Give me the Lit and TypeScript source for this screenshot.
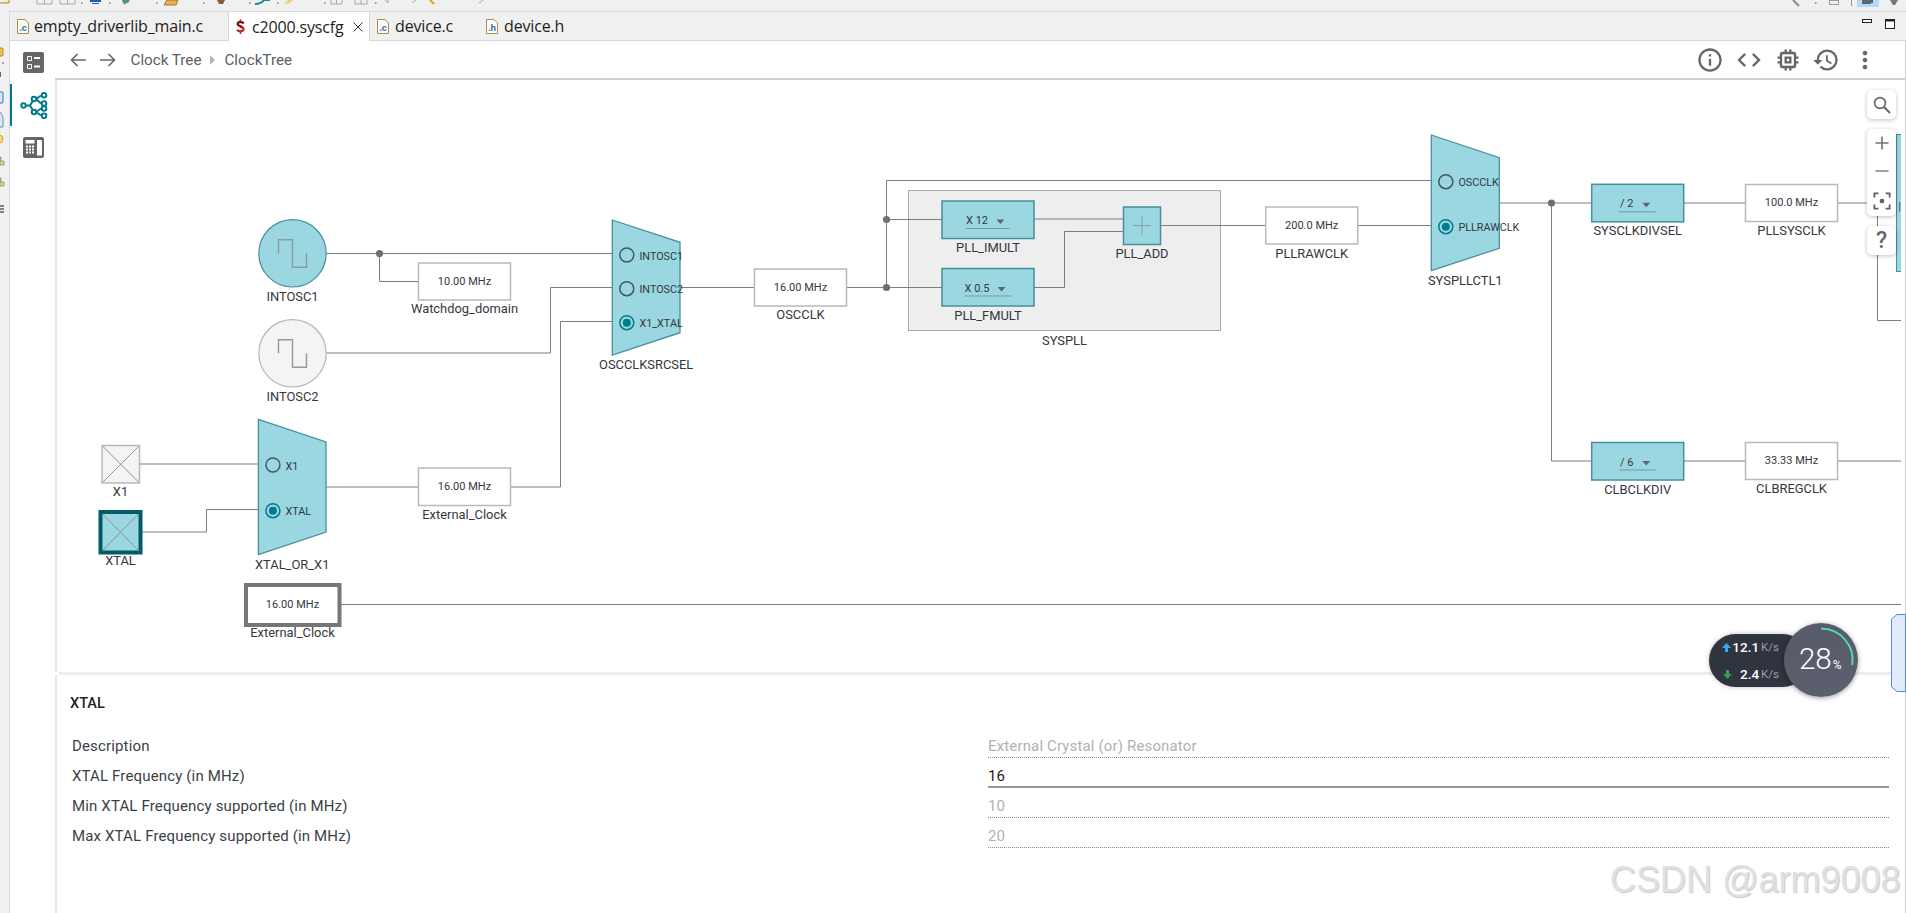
import { LitElement, html, css, svg } from "lit";
import { customElement } from "lit/decorators.js";

const TEAL = "#9ad7e0";
const TEAL_LINE = "#46909c";
const WIRE = "#7d7d7d";

const wires: string[] = [
  "M326.5 253.5H612",
  "M379.5 253.5V281.5H418",
  "M326.5 353H550.5V287.5H612",
  "M510.6 487H560.5V321.5H612",
  "M326 487H418",
  "M139.6 464H258",
  "M142 532H206.5V509.5H258",
  "M341 604.5H1901",
  "M680 287.5H754",
  "M846 287.5H942",
  "M886.5 287.5V180.5H1431",
  "M886.5 219.5H942",
  "M1034 219H1123",
  "M1034 287.5H1064.5V231.5H1123",
  "M1161 225.5H1266",
  "M1357.6 225.5H1431",
  "M1499 203H1591",
  "M1551.5 203V461H1591",
  "M1684 203H1745",
  "M1837 203H1896",
  "M1877.5 203V320.5H1901",
  "M1684 461H1745",
  "M1837 461H1901",
];
const dots: [number, number][] = [
  [379.5, 253.5],
  [886.5, 219.5],
  [886.5, 287.5],
  [1551.5, 203],
];

const label = (x: number, y: number, t: string, size = 12.9) =>
  svg`<text x=${x} y=${y} class="t" font-size=${size} text-anchor="middle" dominant-baseline="central">${t}</text>`;

const valueBox = (x: number, y: number, w: number, h: number, v: string, l: string, ly: number) => svg`
  <rect x=${x} y=${y} width=${w} height=${h} fill="#fff" stroke="#b9b9b9" stroke-width="1.5"></rect>
  ${label(x + w / 2, y + h / 2 - 0.5, v, 11)}
  ${label(x + w / 2, ly, l)}`;

const dropBox = (x: number, y: number, v: string, l: string, tx: number, ax: number, u1: number, u2: number) => svg`
  <rect x=${x} y=${y} width="92" height="37.5" fill=${TEAL} stroke=${TEAL_LINE} stroke-width="1.5"></rect>
  <text x=${tx} y=${y + 19.5} class="t" font-size="11" dominant-baseline="central">${v}</text>
  <path d="M${ax - 4} ${y + 18.5}h8l-4 4.5z" fill="#566a70"></path>
  <path d="M${u1} ${y + 27.5}H${u2}" stroke="#6f9ba5" stroke-width="1"></path>
  ${label(x + 46, y + 46.5, l)}`;

const radio = (x: number, y: number, t: string, on: boolean) => svg`
  <circle cx=${x} cy=${y} r="7" fill="none" stroke=${on ? "#007c8c" : "#47585e"} stroke-width="1.5"></circle>
  ${on ? svg`<circle cx=${x} cy=${y} r="4" fill="#007c8c"></circle>` : ""}
  <text x=${x + 12.6} y=${y + 1.2} class="t" font-size="10.8" dominant-baseline="central">${t}</text>`;

const mux = (x: number, w: number, top: number, rt: number, rb: number, bot: number, l: string, ly: number, items: [number, string, boolean][]) => svg`
  <path d="M${x} ${top}L${x + w} ${rt}V${rb}L${x} ${bot}Z" fill=${TEAL} stroke=${TEAL_LINE} stroke-width="1.3"></path>
  ${items.map(([y, t, on]) => radio(x + 14.5, y, t, on))}
  ${label(x + w / 2, ly, l)}`;

const wave = (cx: number, cy: number) =>
  svg`<path d="M${cx - 14} ${cy}V${cy - 13.5}H${cx}V${cy + 14}H${cx + 14}V${cy}" fill="none" stroke="#8f9a9d" stroke-width="1.4"></path>`;

const crossBox = (x: number, y: number, w: number, h: number, fill: string, stroke: string, sw: number) => svg`
  <rect x=${x} y=${y} width=${w} height=${h} fill=${fill} stroke=${stroke} stroke-width=${sw}></rect>
  <path d="M${x + sw / 2} ${y + sw / 2}L${x + w - sw / 2} ${y + h - sw / 2}M${x + w - sw / 2} ${y + sw / 2}L${x + sw / 2} ${y + h - sw / 2}" stroke="#8d9699" stroke-width="1"></path>`;

const fileIcon = (letter: string) => html`<svg class="ficon" width="12" height="15" viewBox="0 0 12 15">
  <path d="M.5.5H8L11.5 4V14.5H.5Z" fill="#fdfdf8" stroke="#a98c4e"></path>
  <text x="6" y="11.5" text-anchor="middle" font-size="9" font-family="Liberation Sans" font-weight="700" fill="#2f62a8">${letter}</text>
</svg>`;

@customElement("app-root")
export class AppRoot extends LitElement {
  static styles = css`
    :host { display: block; width: 1906px; height: 913px; position: relative; overflow: hidden; background: #f0f0f0; font-family: Roboto, "Liberation Sans", sans-serif; color: #30343a; }
    .shell { display: grid; grid-template-rows: 12px 1fr; height: 913px; }
    .toolbar { display: block; }
    .work { display: grid; grid-template-columns: 9px 1fr; min-height: 0; }
    .strip { display: block; }
    .main { display: grid; grid-template-rows: 29px 1fr; min-height: 0; border-top: 1px solid #d9d9d9; border-left: 1px solid #d9d9d9; margin-top: -1px; }
    .tabs { display: flex; align-items: stretch; background: #f0f0f0; border-bottom: 1px solid #d8d8d8; font-family: "Open Sans", sans-serif; font-size: 16px; color: #1d1d1d; position: relative; }
    .tab { display: flex; align-items: center; gap: 5px; box-sizing: border-box; letter-spacing: -0.16px; white-space: nowrap; }
    .tab.a { width: 218px; padding-left: 7px; }
    .tab.b { width: 142px; background: #fff; border-left: 1px solid #d8d8d8; border-right: 1px solid #d8d8d8; margin-bottom: -1px; padding-left: 6px; gap: 6px; }
    .tab.c { width: 116px; padding-left: 7px; gap: 6px; }
    .tab.d { width: 109px; padding-left: 0; gap: 6px; }
    .ficon { flex: none; }
    .close { margin-left: 3px; flex: none; }
    .winbtns { position: absolute; right: 10px; top: 6px; }
    .body { display: grid; grid-template-columns: 45px 1fr; background: #fff; min-height: 0; }
    .side { display: flex; flex-direction: column; align-items: center; padding: 11px 0 0 2px; }
    .side-item { width: 100%; display: flex; justify-content: center; align-items: center; box-sizing: border-box; }
    .side-item.one { height: 21px; margin-bottom: 11px; }
    .side-item.two { height: 42px; margin: 0 0 11px -2px; width: calc(100% + 2px); border-left: 2px solid #007c8c; }
    .side-item.three { height: 21px; }
    .content { display: grid; grid-template-rows: 39px 592px 3px 1fr; min-height: 0; min-width: 0; border-right: 1px solid #cfcfcf; }
    .nav { display: flex; align-items: center; padding-left: 15px; border-bottom: 2px solid #d2d2d2; box-sizing: border-box; gap: 14px; }
    .crumbs { display: flex; align-items: center; margin-left: 0.5px; gap: 9px; font-size: 15.2px; color: #5b6066; }
    .nav-icons { margin-left: auto; display: flex; gap: 10.7px; padding-right: 26px; color: #666; }
    .nav-icons svg { display: block; fill: #666; }
    .canvas { position: relative; border-left: 2px solid #e6e6e6; margin-right: 4px; overflow: hidden; }
    .canvas svg { display: block; }
    .t { font-family: Roboto, "Liberation Sans", sans-serif; fill: #34383d; }
    .sep { margin-left: 4px; background: #eeeeee; margin-right: 4px; }
    .details { border-left: 2px solid #e6e6e6; padding: 19px 16px 0 13px; }
    h2 { margin: 0 0 14px 0; font-weight: 500; font-size: 14.5px; line-height: 20px; color: #222; }
    .row { display: grid; grid-template-columns: 916px 901px; height: 30px; box-sizing: border-box; padding-left: 2px; font-size: 15px; line-height: 20px; letter-spacing: 0.15px; color: #3a3f47; }
    .row .v { padding-top: 8px; box-sizing: border-box; height: 30px; border-bottom: 1px dotted #8a8a8a; color: #b1b1b1; }
    .row .k { padding-top: 8px; }
    .row .v.edit { border-bottom: 2px solid #999; color: #1f2329; }
    .ctl { position: absolute; left: 1867px; width: 29px; background: #fff; border-radius: 5px; box-shadow: 0 1px 4px rgba(0,0,0,.25); display: flex; flex-direction: column; align-items: center; color: #666; }
    .ctl svg { display: block; }
    .ctl.s { top: 90px; height: 29px; justify-content: center; }
    .ctl.z { top: 129px; height: 87px; justify-content: space-around; }
    .ctl.h { top: 226px; height: 29px; justify-content: center; font: 500 23px/29px Roboto, sans-serif; }
    .speed { position: absolute; left: 1709px; top: 634px; width: 100px; height: 53px; border-radius: 27px; background: #30343f; box-shadow: 0 0 5px rgba(0,0,0,.25); color: #fff; font-size: 13.5px; font-weight: 500; }
    .sp { position: absolute; left: 0; width: 70px; height: 20px; display: flex; align-items: center; justify-content: flex-end; gap: 0; }
    .sp.u { top: 3px; }
    .sp.d { top: 30px; }
    .sp i { font-style: normal; font-weight: 400; font-size: 11.5px; color: #9a9da6; margin-left: 2px; }
    .sp svg { margin-right: 1px; }
    .sp svg.down { margin-right: 8px; }
    .gauge { position: absolute; left: 1784px; top: 623px; width: 74px; height: 74px; border-radius: 50%; background: linear-gradient(160deg, #565a69, #5c606e); box-shadow: 0 1px 5px rgba(0,0,0,.4); color: #fff; }
    .gauge svg { position: absolute; left: 0; top: 0; }
    .pct { position: absolute; left: 15px; top: 20px; font-size: 29.5px; line-height: 32px; font-weight: 300; display: flex; align-items: baseline; }
    .pct small { font-size: 12px; font-weight: 400; margin-left: 1px; }
    .hex { position: absolute; left: 1891px; top: 614px; }
    .mark { position: absolute; left: 1610px; top: 861px; font: 36px/38px "Liberation Sans", Arial, sans-serif; color: #e0e0e0; text-shadow: 1px 1px 1px #c9c9c9; white-space: nowrap; }
  `;

  private toolbar() {
    const grays = [[37, 15], [60, 15], [331, 11], [355, 12]];
    const dots = [81, 109, 156, 203, 249, 277, 324, 375, 1815];
    return html`<svg class="toolbar" width="1906" height="12" viewBox="0 0 1906 12">
      <path d="M0 3H9V0" fill="#f5df9a" stroke="#a98c4e"></path>
      ${grays.map(([x, w]) => svg`<path d="M${x} 4V0M${x + w} 4V0M${x} 4H${x + w}M${x + w / 2} 4V0" fill="none" stroke="#a8a8a8"></path>`)}
      ${dots.map((x) => svg`<rect x=${x} y="2" width="1.5" height="2" fill="#9a9a9a"></rect>`)}
      <rect x="90" y="0" width="11" height="2" fill="#1f5fb0"></rect><rect x="92" y="3" width="7" height="1" fill="#1f5fb0"></rect>
      <path d="M122 0h8l-2 3h-2l-1 2-2-2z" fill="#4d9a76"></path>
      <path d="M164 5L167 0H178L176 5Z" fill="#e3b257" stroke="#a9772c"></path>
      <path d="M217 0H225L223 4H219Z" fill="#8e5a2f"></path>
      <path d="M255 4C260 4 262 3 264 0H270" fill="none" stroke="#1a87a0" stroke-width="2"></path>
      <path d="M284 4L288 0H293L290 3Z" fill="#f4d27a"></path>
      <path d="M385 0L388 3V0M412 3L416 0M479 3L483 0" fill="none" stroke="#b0a890"></path>
      <path d="M430 0L434 4" stroke="#dd9a2a" stroke-width="2"></path>
      <path d="M1793 0L1799 6" stroke="#888" stroke-width="2"></path>
      <rect x="1829.5" y="0.5" width="9" height="4" fill="none" stroke="#999"></rect>
      <rect x="1851" y="0" width="1" height="6" fill="#999"></rect>
      <rect x="1857" y="0" width="22" height="7" fill="#b5d8f6"></rect>
      <path d="M1862 0h9v4h-9zM1870 0h3v3h-3z" fill="#5d6470"></path>
      <path d="M1890 0h8l-3 5h-2z" fill="#777"></path>
    </svg>`;
  }

  private strip() {
    return html`<svg class="strip" width="9" height="901" viewBox="0 12 9 901">
      <rect x="-2" y="48" width="5" height="8" rx="1" fill="#f1c04e" stroke="#b78a25"></rect>
      <rect x="2" y="62" width="2" height="2" fill="#a5a5a5"></rect>
      <rect x="0" y="72" width="1" height="5" fill="#666"></rect>
      <rect x="-3" y="92" width="6" height="11" rx="1" fill="#dbe6f5" stroke="#3f6bb0"></rect>
      <path d="M0 112C4 116 3 122 3 127H-1" fill="#dce6f2" stroke="#6c8bb3"></path>
      <circle cx="-1" cy="139" r="4" fill="#f8dc8a" stroke="#d9a520"></circle>
      <path d="M0 157h1v4h3v4H0zM0 178h1v4h3v4H0z" fill="#e3d28a" stroke="#7d9a5a" stroke-width=".8"></path>
      <path d="M0 206H4M0 209H4M0 212H4" stroke="#111"></path>
    </svg>`;
  }

  private diagram() {
    return html`<svg width="1844" height="592" viewBox="57 80 1844 592" aria-label="Clock tree">
      <rect x="908.5" y="190.5" width="312" height="140" fill="#eeeeee" stroke="#a9a9a9" stroke-width="1"></rect>
      ${label(1064.5, 340, "SYSPLL")}
      ${wires.map((d) => svg`<path d=${d} fill="none" stroke=${WIRE} stroke-width="1"></path>`)}
      ${dots.map(([x, y]) => svg`<circle cx=${x} cy=${y} r="3.6" fill="#707070"></circle>`)}

      <circle cx="292.5" cy="253.3" r="33.7" fill=${TEAL} stroke=${TEAL_LINE} stroke-width="1.2"></circle>
      ${wave(292.5, 253.3)}
      ${label(292.5, 296.7, "INTOSC1")}
      <circle cx="292.5" cy="353.3" r="33.7" fill="#f4f4f4" stroke="#b4b4b4" stroke-width="1.2"></circle>
      ${wave(292.5, 353.3)}
      ${label(292.5, 396.7, "INTOSC2")}
      ${valueBox(418.5, 263, 92, 37, "10.00 MHz", "Watchdog_domain", 308.7)}
      ${mux(612.3, 67.7, 220, 242.3, 332.7, 355, "OSCCLKSRCSEL", 364.7, [[255, "INTOSC1", false], [288.7, "INTOSC2", false], [322.7, "X1_XTAL", true]])}
      ${valueBox(754.5, 269, 92, 37, "16.00 MHz", "OSCCLK", 314.7)}

      ${dropBox(942, 201, "X 12", "PLL_IMULT", 966, 1000.4, 966, 1009.5)}
      ${dropBox(942, 268.5, "X 0.5", "PLL_FMULT", 964.5, 1001.6, 964.5, 1011)}
      <rect x="1123.5" y="207" width="37" height="37.5" fill=${TEAL} stroke=${TEAL_LINE} stroke-width="1.5"></rect>
      <path d="M1133 225.5H1151M1142 216V235" stroke="#84a4aa" stroke-width="1"></path>
      ${label(1142, 253.7, "PLL_ADD")}
      ${valueBox(1265.7, 207, 92, 37, "200.0 MHz", "PLLRAWCLK", 253.7)}

      ${mux(1431.3, 68, 135, 157.7, 248.3, 270.7, "SYSPLLCTL1", 280.7, [[181.7, "OSCCLK", false], [226.7, "PLLRAWCLK", true]])}
      ${dropBox(1591.7, 184.3, "/ 2", "SYSCLKDIVSEL", 1620, 1646.3, 1619, 1655.7)}
      ${valueBox(1745.5, 184.5, 92, 37, "100.0 MHz", "PLLSYSCLK", 230.7)}
      ${dropBox(1591.7, 442.5, "/ 6", "CLBCLKDIV", 1620, 1646.3, 1619, 1655.7)}
      ${valueBox(1745.5, 442.5, 92, 37, "33.33 MHz", "CLBREGCLK", 488.7)}

      <rect x="1896.5" y="134.5" width="10" height="137" fill=${TEAL} stroke=${TEAL_LINE} stroke-width="1"></rect>
      <text x="1898.5" y="206" class="t" font-size="10" dominant-baseline="central">|</text>

      ${crossBox(102, 445.5, 37.5, 37.5, "#f4f4f4", "#b9b9b9", 1.5)}
      ${label(120.5, 491.7, "X1")}
      ${crossBox(100.5, 512, 40, 40.5, TEAL, "#035a69", 4)}
      ${label(120.5, 560, "XTAL")}
      ${mux(258.4, 67.6, 419.3, 442, 532, 554.7, "XTAL_OR_X1", 564.7, [[465, "X1", false], [510.7, "XTAL", true]])}
      ${valueBox(418.5, 468, 92, 37.5, "16.00 MHz", "External_Clock", 514.7)}
      <rect x="246" y="585" width="93.5" height="40" fill="#fff" stroke="#777" stroke-width="4"></rect>
      ${label(292.5, 604, "16.00 MHz", 11)}
      ${label(292.5, 632.7, "External_Clock")}
    </svg>`;
  }

  render() {
    return html`
      <div class="shell">
        ${this.toolbar()}
        <div class="work">
          ${this.strip()}
          <div class="main">
            <div class="tabs">
              <div class="tab a">${fileIcon(".c")}<span>empty_driverlib_main.c</span></div>
              <div class="tab b">
                <svg class="ficon" width="11" height="16" viewBox="0 0 12 18">
                  <path d="M6 0.5V3M6 14V17" stroke="#d5232a" stroke-width="2"></path>
                  <path d="M9.5 5C8.5 3 3 2.5 2.8 5.5C2.6 8.5 9.6 8 9.4 11.5C9.2 14.5 3.5 14.3 2.3 12" fill="none" stroke="#d5232a" stroke-width="2.6"></path>
                  <path d="M9.5 5C8 3 3 2.8 2.8 5.5C2.6 7.5 6 8 7.5 8.8" fill="none" stroke="#222" stroke-width="1.4"></path>
                </svg>
                <span>c2000.syscfg</span>
                <svg class="close" width="10" height="10" viewBox="0 0 10 10"><path d="M.5.5L9.5 9.5M9.5.5L.5 9.5" stroke="#333" fill="none"></path></svg>
              </div>
              <div class="tab c">${fileIcon(".c")}<span>device.c</span></div>
              <div class="tab d">${fileIcon(".h")}<span>device.h</span></div>
              <svg class="winbtns" width="34" height="11" viewBox="0 0 34 11">
                <rect x="0.5" y="1.5" width="9" height="3" fill="#fff" stroke="#222"></rect>
                <rect x="23.5" y="1.5" width="9" height="9" fill="#fff" stroke="#222"></rect>
                <rect x="23" y="1" width="10" height="2.5" fill="#222"></rect>
              </svg>
            </div>
            <div class="body">
              <div class="side">
                <div class="side-item one">
                  <svg width="21" height="21" viewBox="0 0 21 21">
                    <rect width="21" height="21" rx="2" fill="#666"></rect>
                    <path d="M4.5 4.5h4v4h-4zM4.5 12.5h4v4h-4z" fill="none" stroke="#fff"></path>
                    <path d="M11 6h6M11 14.5h6" stroke="#fff" stroke-width="2"></path>
                  </svg>
                </div>
                <div class="side-item two">
                  <svg width="28" height="27" viewBox="0 0 28 27" fill="none" stroke="#007c8c" stroke-width="2">
                    <path d="M5 13.5H10L14 7M10 13.5L14 20M16 7L21 3.5M16 7L21 11.5M16 20L21 16.5M16 20L21 23.5"></path>
                    <g fill="#fff">
                      <circle cx="3.5" cy="13.5" r="2.2"></circle><circle cx="14" cy="7" r="2.3"></circle><circle cx="14" cy="20" r="2.3"></circle>
                      <circle cx="24" cy="3.2" r="2.3"></circle><circle cx="24" cy="11.5" r="2.3"></circle><circle cx="24" cy="16.5" r="2.3"></circle><circle cx="24" cy="23.8" r="2.3"></circle>
                    </g>
                  </svg>
                </div>
                <div class="side-item three">
                  <svg width="21" height="21" viewBox="0 0 21 21">
                    <rect width="21" height="21" rx="2" fill="#666"></rect>
                    <rect x="2.5" y="3" width="9" height="3.5" fill="#fff"></rect>
                    <rect x="14" y="3" width="5" height="15.5" fill="#fff"></rect>
                    ${[8.5, 11.5, 14.5].map((y) => [3, 6, 9].map((x) => svg`<rect x=${x} y=${y} width="2" height="2" fill="#fff"></rect>`))}
                  </svg>
                </div>
              </div>
              <div class="content">
                <div class="nav">
                  <svg width="16" height="14" viewBox="0 0 16 14" fill="none" stroke="#6a6a6a" stroke-width="1.7"><path d="M16 7H1.5M7.5 1L1.5 7L7.5 13"></path></svg>
                  <svg width="16" height="14" viewBox="0 0 16 14" fill="none" stroke="#6a6a6a" stroke-width="1.7"><path d="M0 7H14.5M8.5 1L14.5 7L8.5 13"></path></svg>
                  <div class="crumbs">
                    <span>Clock Tree</span>
                    <svg width="5" height="10" viewBox="0 0 5 10"><path d="M0 0L5 5L0 10Z" fill="#b5b5b5"></path></svg>
                    <span>ClockTree</span>
                  </div>
                  <div class="nav-icons">
                    <svg width="28" height="28" viewBox="0 0 24 24"><path d="M11 7h2v2h-2zm0 4h2v6h-2zm1-9C6.48 2 2 6.48 2 12s4.48 10 10 10 10-4.48 10-10S17.52 2 12 2zm0 18c-4.41 0-8-3.59-8-8s3.59-8 8-8 8 3.59 8 8-3.59 8-8 8z"></path></svg>
                    <svg width="28" height="28" viewBox="0 0 24 24"><path d="M9.4 16.6L4.8 12l4.6-4.6L8 6l-6 6 6 6 1.4-1.4zm5.2 0l4.6-4.6-4.6-4.6L16 6l6 6-6 6-1.4-1.4z"></path></svg>
                    <svg width="28" height="28" viewBox="0 0 24 24"><path d="M15 9H9v6h6V9zm-2 4h-2v-2h2v2zm8-2V9h-2V7c0-1.1-.9-2-2-2h-2V3h-2v2h-2V3H9v2H7c-1.1 0-2 .9-2 2v2H3v2h2v2H3v2h2v2c0 1.1.9 2 2 2h2v2h2v-2h2v2h2v-2h2c1.1 0 2-.9 2-2v-2h2v-2h-2v-2h2zm-4 6H7V7h10v10z"></path></svg>
                    <svg width="28" height="28" viewBox="0 0 24 24"><path d="M13 3a9 9 0 0 0-9 9H1l3.89 3.89.07.14L9 12H6c0-3.87 3.13-7 7-7s7 3.13 7 7-3.13 7-7 7c-1.93 0-3.68-.79-4.94-2.06l-1.42 1.42A8.954 8.954 0 0 0 13 21a9 9 0 0 0 0-18zm-1 5v5l4.28 2.54.72-1.21-3.5-2.08V8H12z"></path></svg>
                    <svg width="28" height="28" viewBox="0 0 24 24"><path d="M12 8c1.1 0 2-.9 2-2s-.9-2-2-2-2 .9-2 2 .9 2 2 2zm0 2c-1.1 0-2 .9-2 2s.9 2 2 2 2-.9 2-2-.9-2-2-2zm0 6c-1.1 0-2 .9-2 2s.9 2 2 2 2-.9 2-2-.9-2-2-2z"></path></svg>
                  </div>
                </div>
                <div class="canvas">${this.diagram()}</div>
                <div class="sep"></div>
                <div class="details">
                  <h2>XTAL</h2>
                  <div class="row"><div class="k">Description</div><div class="v">External Crystal (or) Resonator</div></div>
                  <div class="row"><div class="k">XTAL Frequency (in MHz)</div><div class="v edit">16</div></div>
                  <div class="row"><div class="k">Min XTAL Frequency supported (in MHz)</div><div class="v">10</div></div>
                  <div class="row"><div class="k">Max XTAL Frequency supported (in MHz)</div><div class="v">20</div></div>
                </div>
              </div>
            </div>
          </div>
        </div>
      </div>

      <div class="ctl s">
        <svg width="20" height="20" viewBox="0 0 20 20" fill="none" stroke="#666" stroke-width="1.6"><circle cx="8" cy="8" r="5.4"></circle><path d="M12 12L18 18" stroke-width="2"></path></svg>
      </div>
      <div class="ctl z">
        <svg width="16" height="16" viewBox="0 0 16 16"><path d="M8 1.5V14.5M1.5 8H14.5" stroke="#707070" stroke-width="1.6"></path></svg>
        <svg width="16" height="16" viewBox="0 0 16 16"><path d="M1.5 8H14.5" stroke="#8a8a8a" stroke-width="1.6"></path></svg>
        <svg width="18" height="18" viewBox="0 0 20 20" fill="none" stroke="#5f5f5f" stroke-width="2"><path d="M1.5 6V1.5H6M14 1.5H18.5V6M18.5 14V18.5H14M6 18.5H1.5V14"></path><circle cx="10" cy="10" r="2.6" fill="#5f5f5f" stroke="none"></circle></svg>
      </div>
      <div class="ctl h">?</div>

      <div class="speed">
        <div class="sp u"><svg width="9" height="9" viewBox="0 0 9 9"><path d="M4.5 0L9 5H6V9H3V5H0Z" fill="#3ca7e0"></path></svg><span>12.1</span><i>K/s</i></div>
        <div class="sp d"><svg class="down" width="9" height="9" viewBox="0 0 9 9"><path d="M3 0H6V4H9L4.5 9L0 4H3Z" fill="#27a84a"></path></svg><span>2.4</span><i>K/s</i></div>
      </div>
      <div class="gauge">
        <svg width="74" height="74" viewBox="0 0 74 74"><path d="M37 5.5A31.5 31.5 0 0 1 68.2 42" fill="none" stroke="#52d6bb" stroke-width="2"></path></svg>
        <div class="pct">28<small>%</small></div>
      </div>
      <svg class="hex" width="15" height="78" viewBox="0 0 15 78"><path d="M14.5 .5H6L.5 5V73L6 77.5H14.5Z" fill="#e1ebfb" stroke="#4b8bf0"></path></svg>
      <div class="mark">CSDN @arm9008</div>
    `;
  }
}
